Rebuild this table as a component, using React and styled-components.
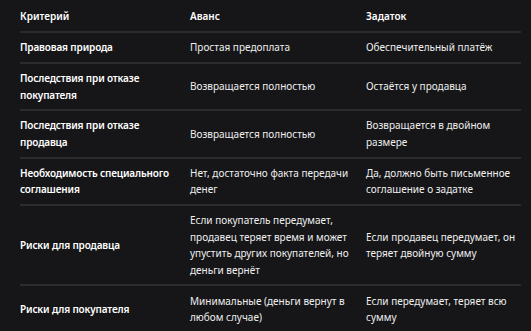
import styled, { createGlobalStyle } from "styled-components";

/**
 * Comparison table: аванс vs задаток
 */
const GlobalStyle = createGlobalStyle`
    html, body {
        margin: 0;
        background: #161618;
    }
`

const Page = styled.div`
    padding: 0 10px 0 20px;
    font-family: "Noto Sans", "Open Sans", sans-serif;
    font-size: 10px;
    line-height: 16.5px;
    color: #efefef;
`

const Table = styled.table`
    width: 501px;
    border-collapse: collapse;
    table-layout: fixed;
`

const HeadCell = styled.th`
    box-sizing: border-box;
    width: ${(p) => p.$w}px;
    padding: 7.5px 8px 7px 0;
    text-align: left;
    font-weight: 600;
    color: #fff;
    border-bottom: 2px solid #2b2b2e;
`

const Row = styled.tr`
    border-bottom: 2px solid #2b2b2e;

    &:last-child {
        border-bottom: none;
    }
`

const Cell = styled.td`
    box-sizing: border-box;
    padding: 6.2px 8px 6.2px 0;
    vertical-align: middle;
    white-space: nowrap;
    font-weight: ${(p) => (p.$strong ? 600 : 400)};
    letter-spacing: ${(p) => (p.$strong ? "-0.15px" : "0")};
    color: ${(p) => (p.$strong ? "#fff" : "#efefef")};
`

const columns = [
    { title: "Критерий", width: 170 },
    { title: "Аванс", width: 176 },
    { title: "Задаток", width: 155 },
];

const rows = [
    [["Правовая природа"], ["Простая предоплата"], ["Обеспечительный платёж"]],
    [["Последствия при отказе", "покупателя"], ["Возвращается полностью"], ["Остаётся у продавца"]],
    [["Последствия при отказе", "продавца"], ["Возвращается полностью"], ["Возвращается в двойном", "размере"]],
    [
        ["Необходимость специального", "соглашения"],
        ["Нет, достаточно факта передачи", "денег"],
        ["Да, должно быть письменное", "соглашение о задатке"],
    ],
    [
        ["Риски для продавца"],
        ["Если покупатель передумает,", "продавец теряет время и может", "упустить других покупателей, но", "деньги вернёт"],
        ["Если продавец передумает, он", "теряет двойную сумму"],
    ],
    [
        ["Риски для покупателя"],
        ["Минимальные (деньги вернут в", "любом случае)"],
        ["Если передумает, теряет всю", "сумму"],
    ],
];

function Lines({ lines }) {
    return lines.map((line, i) => (
        <span key={i}>
            {i > 0 && <br />}
            {line}
        </span>
    ));
}

export default function App() {
    return (
        <Page>
            <GlobalStyle />
            <Table>
                <thead>
                    <tr>
                        {columns.map((c) => (
                            <HeadCell key={c.title} $w={c.width}>{c.title}</HeadCell>
                        ))}
                    </tr>
                </thead>
                <tbody>
                    {rows.map((row, r) => (
                        <Row key={r}>
                            {row.map((cell, c) => (
                                <Cell key={c} $strong={c === 0}>
                                    <Lines lines={cell} />
                                </Cell>
                            ))}
                        </Row>
                    ))}
                </tbody>
            </Table>
        </Page>
    );
}
